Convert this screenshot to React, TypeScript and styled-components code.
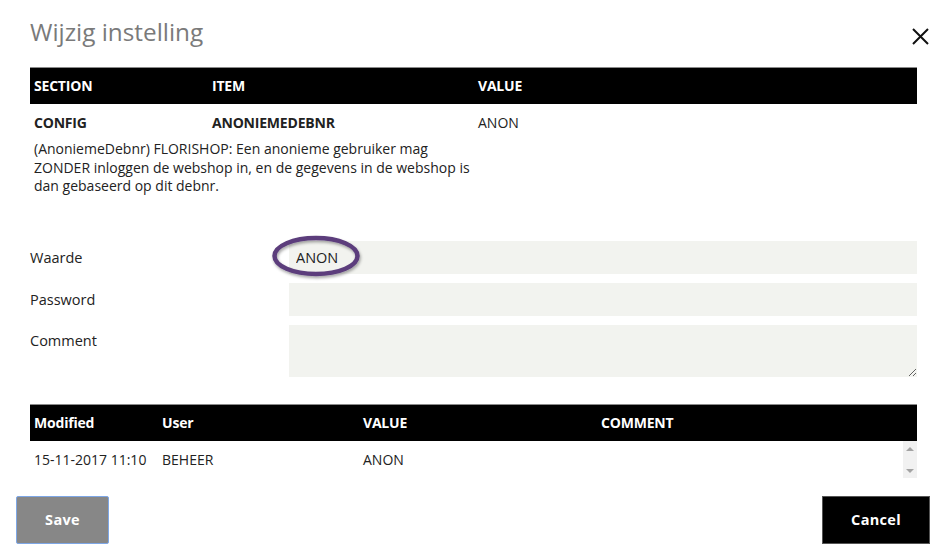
import React from "react";
import styled, { createGlobalStyle } from "styled-components";

const Global = createGlobalStyle`
  html, body { margin: 0; padding: 0; background: #fff; }
  body { font-family: "Open Sans", "Noto Sans", sans-serif; color: #222; }
  * { box-sizing: border-box; }
`;

const Dialog = styled.div`
  width: 945px;
  height: 557px;
  background: #fff;
  display: flex;
  flex-direction: column;
`;

const Header = styled.div`
  display: flex;
  align-items: flex-start;
  justify-content: space-between;
  padding: 15px 15px 0 30px;
  height: 67px;
`;

const Title = styled.h1`
  margin: 0;
  font-weight: 400;
  font-size: 24.3px;
  line-height: 34px;
  color: #7a7a7a;
`;

const CloseButton = styled.button`
  border: 0;
  background: none;
  padding: 0;
  margin-top: 12px;
  width: 19px;
  height: 19px;
  cursor: pointer;
  display: flex;
`;

const Content = styled.div`
  padding: 0 28px 0 30px;
  display: flex;
  flex-direction: column;
`;

const Table = styled.table`
  width: 100%;
  border-collapse: collapse;
  table-layout: fixed;
`;

const HeadRow = styled.tr`
  background: #000;
  height: 37px;
  box-shadow: inset 0 1px 0 #8a8a8a;
`;

const Th = styled.th<{ $w?: number }>`
  ${(p) => (p.$w ? `width: ${p.$w}px;` : "")}
  text-align: left;
  color: #fff;
  font-weight: 700;
  font-size: 14px;
  padding: 0 4px;
  letter-spacing: -0.2px;
`;

const Td = styled.td<{ $bold?: boolean }>`
  padding: 9px 4px 4px;
  font-size: 14px;
  line-height: 19px;
  font-weight: ${(p) => (p.$bold ? 700 : 400)};
  color: #222;
  vertical-align: top;
  letter-spacing: ${(p) => (p.$bold ? "-0.2px" : "0")};
`;

const DescCell = styled.td`
  padding: 4px 4px 0;
  font-size: 14px;
  line-height: 18.5px;
  color: #222;
`;

const Form = styled.div`
  margin-top: 45px;
  display: flex;
  flex-direction: column;
  gap: 9px;
`;

const FieldRow = styled.div<{ $top?: boolean }>`
  display: grid;
  grid-template-columns: 259px 1fr;
  align-items: ${(p) => (p.$top ? "start" : "center")};
`;

const Label = styled.label<{ $top?: boolean }>`
  font-size: 14.5px;
  color: #222;
  ${(p) => (p.$top ? "padding-top: 6px;" : "")}
`;

const FieldWrap = styled.div`
  position: relative;
`;

const Input = styled.input`
  width: 100%;
  height: 33px;
  border: 0;
  background: #f2f3ef;
  padding: 0 7px;
  font-family: inherit;
  font-size: 14.5px;
  color: #222;
  outline: none;
`;

const TextArea = styled.textarea`
  width: 100%;
  height: 52px;
  border: 0;
  background: #f2f3ef;
  display: block;
  resize: vertical;
  font-family: inherit;
  font-size: 14.5px;
  outline: none;
`;

const Circle = styled.svg`
  position: absolute;
  left: -17px;
  top: -6px;
  pointer-events: none;
  overflow: visible;
`;

const History = styled.div`
  margin-top: 27px;
`;

const HistBody = styled.div`
  display: flex;
  height: 37px;
`;

const HistTable = styled(Table)`
  flex: 1;
`;

const ScrollTrack = styled.div`
  width: 14px;
  background: #f1f1f1;
  display: flex;
  flex-direction: column;
  justify-content: space-between;
  align-items: center;
  padding: 6px 0 5px;
`;

const Arrow = styled.div<{ $down?: boolean }>`
  width: 0;
  height: 0;
  border-left: 4px solid transparent;
  border-right: 4px solid transparent;
  ${(p) =>
    p.$down
      ? "border-top: 4px solid #a3a3a3;"
      : "border-bottom: 4px solid #a3a3a3;"}
`;

const HistTd = styled.td<{ $w?: number }>`
  ${(p) => (p.$w ? `width: ${p.$w}px;` : "")}
  padding: 0 4px;
  height: 37px;
  font-size: 14px;
  color: #222;
  vertical-align: middle;
  white-space: nowrap;
`;

const Footer = styled.div`
  display: flex;
  justify-content: space-between;
  padding: 18px 15px 0 16px;
`;

const Button = styled.button<{ $variant: "save" | "cancel" }>`
  height: 48px;
  font-family: inherit;
  font-weight: 700;
  font-size: 14.5px;
  color: #fff;
  cursor: pointer;
  letter-spacing: 0.3px;
  ${(p) =>
    p.$variant === "save"
      ? "width: 93px; background: #878787; border: 1px solid #7ea7e6; border-radius: 2px;"
      : "width: 108px; background: #000; border: 1px solid #555;"}
`;

export default function App() {
  return (
    <Dialog>
      <Global />
      <Header>
        <Title>Wijzig instelling</Title>
        <CloseButton aria-label="close">
          <svg width="19" height="19" viewBox="0 0 19 19">
            <path d="M2 2 L17 17 M17 2 L2 17" stroke="#111" strokeWidth="2" />
          </svg>
        </CloseButton>
      </Header>
      <Content>
        <Table>
          <thead>
            <HeadRow>
              <Th $w={178}>SECTION</Th>
              <Th $w={266}>ITEM</Th>
              <Th>VALUE</Th>
            </HeadRow>
          </thead>
          <tbody>
            <tr>
              <Td $bold>CONFIG</Td>
              <Td $bold>ANONIEMEDEBNR</Td>
              <Td>ANON</Td>
            </tr>
            <tr>
              <DescCell colSpan={2}>
                (AnoniemeDebnr) FLORISHOP: Een anonieme gebruiker mag ZONDER
                inloggen de webshop in, en de gegevens in de webshop is dan
                gebaseerd op dit debnr.
              </DescCell>
              <DescCell />
            </tr>
          </tbody>
        </Table>

        <Form>
          <FieldRow>
            <Label>Waarde</Label>
            <FieldWrap>
              <Input defaultValue="ANON" />
              <Circle width="91" height="45" viewBox="0 0 91 45">
                <defs>
                  <filter id="sh" x="-20%" y="-30%" width="140%" height="160%">
                    <feDropShadow dx="1" dy="2" stdDeviation="1.5" floodColor="#000" floodOpacity="0.35" />
                  </filter>
                </defs>
                <ellipse
                  cx="44"
                  cy="21"
                  rx="41.5"
                  ry="18"
                  fill="none"
                  stroke="#5b3e7b"
                  strokeWidth="4.5"
                  filter="url(#sh)"
                />
              </Circle>
            </FieldWrap>
          </FieldRow>
          <FieldRow>
            <Label>Password</Label>
            <Input type="password" />
          </FieldRow>
          <FieldRow $top>
            <Label $top>Comment</Label>
            <TextArea />
          </FieldRow>
        </Form>

        <History>
          <Table>
            <thead>
              <HeadRow>
                <Th $w={128}>Modified</Th>
                <Th $w={201}>User</Th>
                <Th $w={238}>VALUE</Th>
                <Th>COMMENT</Th>
              </HeadRow>
            </thead>
          </Table>
          <HistBody>
            <HistTable>
              <tbody>
                <tr>
                  <HistTd $w={128}>15-11-2017 11:10</HistTd>
                  <HistTd $w={201}>BEHEER</HistTd>
                  <HistTd $w={238}>ANON</HistTd>
                  <HistTd />
                </tr>
              </tbody>
            </HistTable>
            <ScrollTrack>
              <Arrow />
              <Arrow $down />
            </ScrollTrack>
          </HistBody>
        </History>
      </Content>
      <Footer>
        <Button $variant="save">Save</Button>
        <Button $variant="cancel">Cancel</Button>
      </Footer>
    </Dialog>
  );
}
